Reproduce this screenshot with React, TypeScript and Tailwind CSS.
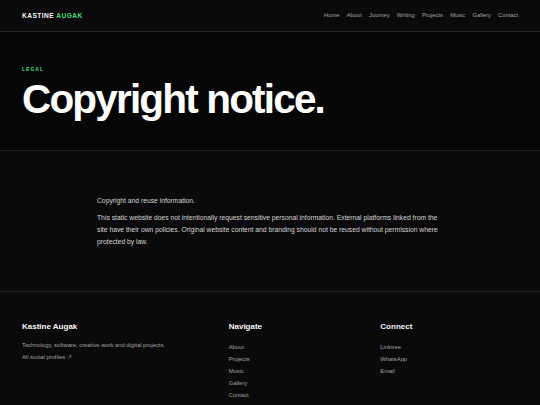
import React from "react";

const navLinks = ["Home", "About", "Journey", "Writing", "Projects", "Music", "Gallery", "Contact"];
const footerNav = ["About", "Projects", "Music", "Gallery", "Contact"];
const connectLinks = ["Linktree", "WhatsApp", "Email"];

const App: React.FC = () => {
  return (
    <div
      className="min-h-screen bg-[#0a0a0a] text-white"
      style={{ fontFamily: '"Liberation Sans", Arial, sans-serif' }}
    >
      <header className="h-[32px] border-b border-white/10 px-[22px] flex items-center justify-between">
        <a className="text-[6.6px] font-bold tracking-[0.07em] uppercase text-neutral-100">
          Kastine <span className="text-[#4ade80]">Augak</span>
        </a>
        <nav className="flex items-center gap-[7.2px]">
          {navLinks.map((l) => (
            <a key={l} className="text-[5.8px] text-neutral-400">
              {l}
            </a>
          ))}
        </nav>
      </header>

      <section className="h-[119px] border-b border-white/10 px-[22px] pt-[34px] bg-[#060606]">
        <p className="text-[5px] font-bold uppercase tracking-[0.2em] text-[#4ade80]">Legal</p>
        <h1 className="mt-[5px] text-[40.5px] leading-none font-bold tracking-[-0.045em] text-white">
          Copyright notice.
        </h1>
      </section>

      <main className="h-[141px] border-b border-white/10 pt-[44px]">
        <div className="max-w-[346px] mx-auto text-[6.75px] leading-[12px] text-neutral-300 space-y-[5px]">
          <p>Copyright and reuse information.</p>
          <p>
            This static website does not intentionally request sensitive personal information. External
            platforms linked from the site have their own policies. Original website content and branding
            should not be reused without permission where protected by law.
          </p>
        </div>
      </main>

      <footer className="px-[22px] pt-[29px] pb-[10px]">
        <div className="grid grid-cols-[1.4fr_1fr_1fr] gap-[14px]">
          <div>
            <h3 className="text-[8px] font-bold text-neutral-100">Kastine Augak</h3>
            <p className="mt-[8px] text-[5.8px] leading-[8px] text-neutral-400">
              Technology, software, creative work and digital projects.
            </p>
            <a className="block mt-[4px] text-[5.8px] leading-[8px] text-neutral-400">All social profiles ↗</a>
          </div>
          <div>
            <h3 className="text-[8px] font-bold text-neutral-100">Navigate</h3>
            <ul className="mt-[10px] space-y-[4px]">
              {footerNav.map((l) => (
                <li key={l} className="text-[5.8px] leading-[8px] text-neutral-400">
                  {l}
                </li>
              ))}
            </ul>
          </div>
          <div>
            <h3 className="text-[8px] font-bold text-neutral-100">Connect</h3>
            <ul className="mt-[10px] space-y-[4px]">
              {connectLinks.map((l) => (
                <li key={l} className="text-[5.8px] leading-[8px] text-neutral-400">
                  {l}
                </li>
              ))}
            </ul>
          </div>
        </div>
      </footer>
    </div>
  );
};

export default App;
